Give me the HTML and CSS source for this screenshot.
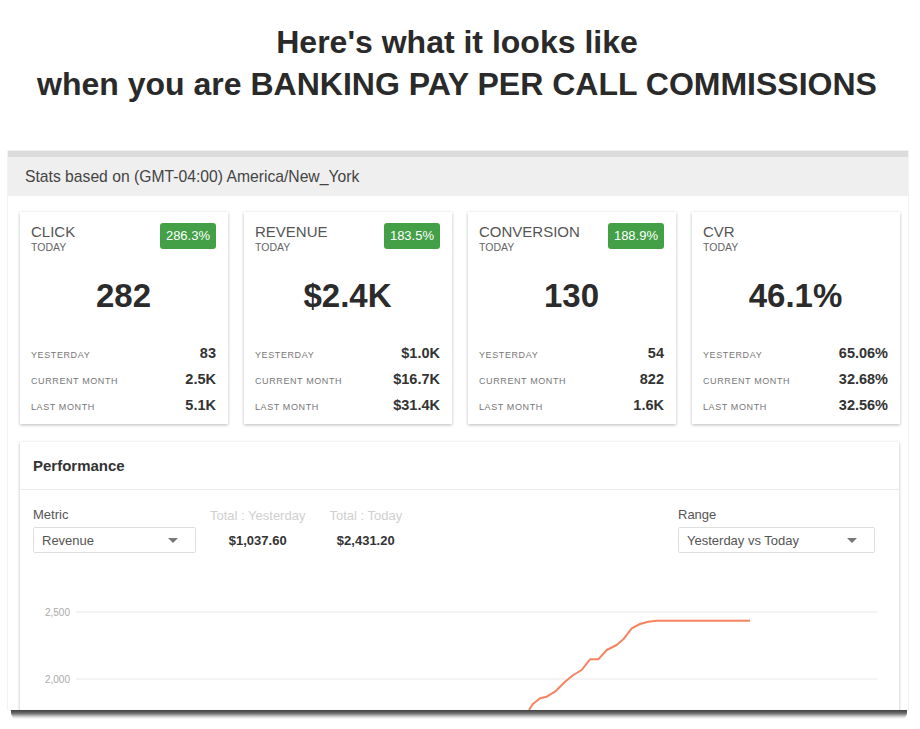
FILE: index.html
```html
<!DOCTYPE html>
<html lang="en">
<head>
    <meta charset="UTF-8">
    <meta name="viewport" content="width=device-width, initial-scale=1.0">
    <title>Pay Per Call Stats</title>
    <link rel="stylesheet" href="styles.css">
</head>
<body>
    <h1 class="headline">Here's what it looks like<br>when you are BANKING PAY PER CALL COMMISSIONS</h1>

    <div class="shot">
        <div class="band-top"></div>
        <div class="band">Stats based on (GMT-04:00) America/New_York</div>

        <div class="cards">
            <div class="card">
                <div class="card-head">
                    <div>
                        <div class="card-title">CLICK</div>
                        <div class="card-sub">TODAY</div>
                    </div>
                    <span class="badge">286.3%</span>
                </div>
                <div class="big">282</div>
                <div class="rows">
                    <div class="row"><span class="label">Yesterday</span><span class="value">83</span></div>
                    <div class="row"><span class="label">Current Month</span><span class="value">2.5K</span></div>
                    <div class="row"><span class="label">Last Month</span><span class="value">5.1K</span></div>
                </div>
            </div>

            <div class="card">
                <div class="card-head">
                    <div>
                        <div class="card-title">REVENUE</div>
                        <div class="card-sub">TODAY</div>
                    </div>
                    <span class="badge">183.5%</span>
                </div>
                <div class="big">$2.4K</div>
                <div class="rows">
                    <div class="row"><span class="label">Yesterday</span><span class="value">$1.0K</span></div>
                    <div class="row"><span class="label">Current Month</span><span class="value">$16.7K</span></div>
                    <div class="row"><span class="label">Last Month</span><span class="value">$31.4K</span></div>
                </div>
            </div>

            <div class="card">
                <div class="card-head">
                    <div>
                        <div class="card-title">CONVERSION</div>
                        <div class="card-sub">TODAY</div>
                    </div>
                    <span class="badge">188.9%</span>
                </div>
                <div class="big">130</div>
                <div class="rows">
                    <div class="row"><span class="label">Yesterday</span><span class="value">54</span></div>
                    <div class="row"><span class="label">Current Month</span><span class="value">822</span></div>
                    <div class="row"><span class="label">Last Month</span><span class="value">1.6K</span></div>
                </div>
            </div>

            <div class="card">
                <div class="card-head">
                    <div>
                        <div class="card-title">CVR</div>
                        <div class="card-sub">TODAY</div>
                    </div>
                </div>
                <div class="big">46.1%</div>
                <div class="rows">
                    <div class="row"><span class="label">Yesterday</span><span class="value">65.06%</span></div>
                    <div class="row"><span class="label">Current Month</span><span class="value">32.68%</span></div>
                    <div class="row"><span class="label">Last Month</span><span class="value">32.56%</span></div>
                </div>
            </div>
        </div>

        <div class="perf">
            <div class="perf-head">Performance</div>

            <div class="controls">
                <div class="field">
                    <div class="field-label">Metric</div>
                    <div class="select metric-select">Revenue<span class="caret"></span></div>
                </div>

                <div class="total first-total">
                    <div class="total-label">Total : Yesterday</div>
                    <div class="total-value">$1,037.60</div>
                </div>
                <div class="total">
                    <div class="total-label">Total : Today</div>
                    <div class="total-value">$2,431.20</div>
                </div>

                <div class="field range-field">
                    <div class="field-label">Range</div>
                    <div class="select range-select">Yesterday vs Today<span class="caret"></span></div>
                </div>
            </div>

            <svg class="chart" width="879" height="157" viewBox="0 0 879 157">
                <line x1="56" y1="59" x2="858" y2="59" class="grid"/>
                <line x1="56" y1="126" x2="858" y2="126" class="grid"/>
                <text x="50" y="63" class="axis">2,500</text>
                <text x="50" y="130" class="axis">2,000</text>
                <polyline class="series" points="509,157 512.7,151.3 520,145.3 526.7,143.7 535,138.7 545,128.7 553.3,122 561.7,117 570,106.3 578.3,106.3 586.7,97 596.7,92 603.3,86.3 611.7,75.3 620,71 628.3,68.7 636.7,67.7 730,67.7"/>
            </svg>
        </div>
    </div>
    <div class="shot-shadow"></div>
</body>
</html>
```

FILE: styles.css
```css
/* Page basics */
body {
    margin: 0;
    font-family: "Liberation Sans", Arial, sans-serif;
    background-color: #fff;
    color: #333;
}

/* Big heading above the screenshot */
.headline {
    margin: 0;
    padding: 21px 6px 0 0;
    font-size: 32px;
    line-height: 42px;
    font-weight: bold;
    text-align: center;
    color: #2a2a2a;
}

/* The dashboard screenshot */
.shot {
    margin: 46px 0 0 8px;
    width: 900px;
    height: 559px;
    overflow: hidden;
    background-color: #fff;
    box-shadow: 0 0 1px rgba(0, 0, 0, 0.3);
}

/* Drop shadow under the cut-off screenshot */
.shot-shadow {
    margin: 0 13px 0 11px;
    height: 9px;
    border-radius: 0 0 6px 6px;
    background: linear-gradient(#3f3f3f, #6a6a6a 35%, rgba(150, 150, 150, 0.4) 75%, rgba(255, 255, 255, 0));
}

.band-top {
    height: 6px;
    background-color: #dcdcdc;
}

.band {
    height: 39px;
    display: flex;
    align-items: center;
    padding-left: 17px;
    background-color: #efefef;
    font-size: 15.7px;
    color: #444;
}

/* Stat cards */
.cards {
    display: flex;
    gap: 16px;
    padding: 16px 0 0 12px;
}

.card {
    width: 208px;
    height: 212px;
    box-sizing: border-box;
    padding: 11px 12px 0 11px;
    background-color: #fff;
    box-shadow: 0 1px 3px rgba(0, 0, 0, 0.28);
}

.card-head {
    display: flex;
    justify-content: space-between;
    align-items: flex-start;
    min-height: 30px;
}

.card-title {
    font-size: 15px;
    line-height: 17px;
    color: #555;
}

.card-sub {
    margin-top: 1px;
    font-size: 10.5px;
    line-height: 12px;
    color: #666;
}

.badge {
    height: 26px;
    line-height: 26px;
    padding: 0 6px;
    border-radius: 3px;
    background-color: #43a047;
    color: #fff;
    font-size: 13px;
}

.big {
    margin-top: 23px;
    font-size: 33px;
    line-height: 40px;
    font-weight: bold;
    text-align: center;
    color: #2b2b2b;
}

.rows {
    margin-top: 24px;
}

.row {
    display: flex;
    justify-content: space-between;
    align-items: baseline;
    height: 26px;
    line-height: 26px;
}

.label {
    font-size: 9px;
    letter-spacing: 0.6px;
    text-transform: uppercase;
    color: #777;
}

.value {
    font-size: 14.5px;
    font-weight: bold;
    color: #333;
}

/* Performance panel */
.perf {
    margin: 18px 0 0 12px;
    width: 879px;
    height: 300px;
    background-color: #fff;
    box-shadow: 0 1px 3px rgba(0, 0, 0, 0.28);
}

.perf-head {
    height: 47px;
    display: flex;
    align-items: center;
    padding-left: 13px;
    border-bottom: 1px solid #ececec;
    font-size: 15px;
    font-weight: bold;
    color: #333;
}

.controls {
    display: flex;
    align-items: flex-start;
    padding: 17px 24px 0 13px;
}

.field-label {
    font-size: 13px;
    line-height: 16px;
    color: #555;
}

.select {
    position: relative;
    margin-top: 4px;
    height: 26px;
    box-sizing: border-box;
    display: flex;
    align-items: center;
    padding-left: 8px;
    border: 1px solid #dedede;
    border-radius: 2px;
    font-size: 13px;
    line-height: 15px;
    color: #555;
}

.metric-select {
    width: 163px;
}

.range-select {
    width: 197px;
}

.caret {
    position: absolute;
    right: 17px;
    top: 10px;
    border-left: 5px solid transparent;
    border-right: 5px solid transparent;
    border-top: 5px solid #777;
}

.total {
    margin-left: 24px;
    text-align: center;
}

.first-total {
    margin-left: 14px;
}

.total-label {
    font-size: 13px;
    line-height: 18px;
    color: #cfcfcf;
}

.total-value {
    margin-top: 6px;
    font-size: 13px;
    line-height: 20px;
    font-weight: bold;
    color: #333;
}

.range-field {
    margin-left: auto;
}

/* Chart */
.chart {
    display: block;
}

.grid {
    stroke: #e8e8e8;
    stroke-width: 1;
}

.axis {
    font-family: "Liberation Sans", Arial, sans-serif;
    font-size: 10px;
    fill: #aaa;
    text-anchor: end;
}

.series {
    fill: none;
    stroke: #f4845f;
    stroke-width: 2;
    stroke-linejoin: round;
}
```
